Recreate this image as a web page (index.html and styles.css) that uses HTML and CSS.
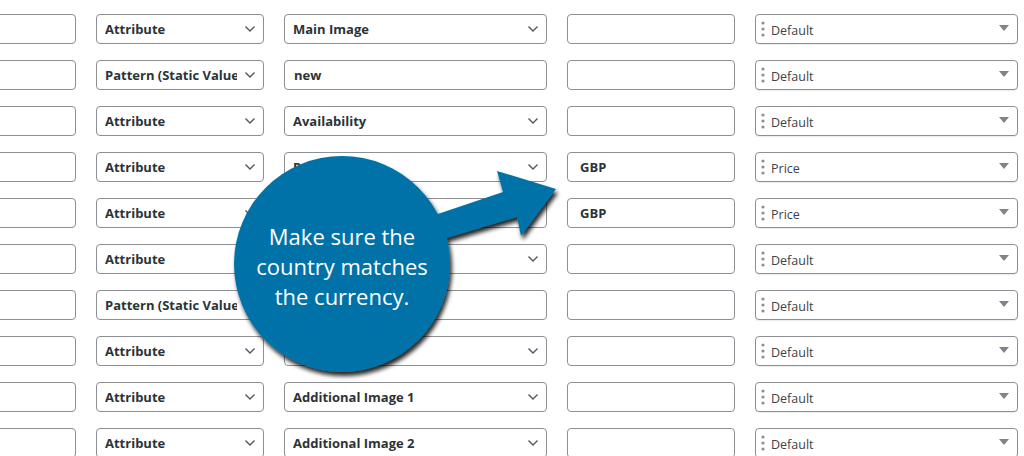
FILE: index.html
```html
<!DOCTYPE html>
<html>
<head>
<meta charset="utf-8">
<link rel="stylesheet" href="styles.css">
</head>
<body>
<div class="table">
  <div class="row">
    <div class="box"></div>
    <div class="box select"><span class="val">Attribute</span><svg class="chev" width="10" height="6" viewBox="0 0 10 6"><polyline points="0.5,0.5 5,5 9.5,0.5"/></svg></div>
    <div class="box select"><span class="val">Main Image</span><svg class="chev" width="10" height="6" viewBox="0 0 10 6"><polyline points="0.5,0.5 5,5 9.5,0.5"/></svg></div>
    <div class="box input"></div>
    <div class="box fancy"><svg class="dots" width="4" height="16" viewBox="0 0 4 16"><circle cx="2" cy="2" r="1.6"/><circle cx="2" cy="8" r="1.6"/><circle cx="2" cy="14" r="1.6"/></svg><span class="fval">Default</span><svg class="tri" width="10" height="6" viewBox="0 0 10 6"><polygon points="0,0 10,0 5,6"/></svg></div>
  </div>
  <div class="row">
    <div class="box"></div>
    <div class="box select"><span class="val">Pattern (Static Value)</span><svg class="chev" width="10" height="6" viewBox="0 0 10 6"><polyline points="0.5,0.5 5,5 9.5,0.5"/></svg></div>
    <div class="box input">new</div>
    <div class="box input"></div>
    <div class="box fancy"><svg class="dots" width="4" height="16" viewBox="0 0 4 16"><circle cx="2" cy="2" r="1.6"/><circle cx="2" cy="8" r="1.6"/><circle cx="2" cy="14" r="1.6"/></svg><span class="fval">Default</span><svg class="tri" width="10" height="6" viewBox="0 0 10 6"><polygon points="0,0 10,0 5,6"/></svg></div>
  </div>
  <div class="row">
    <div class="box"></div>
    <div class="box select"><span class="val">Attribute</span><svg class="chev" width="10" height="6" viewBox="0 0 10 6"><polyline points="0.5,0.5 5,5 9.5,0.5"/></svg></div>
    <div class="box select"><span class="val">Availability</span><svg class="chev" width="10" height="6" viewBox="0 0 10 6"><polyline points="0.5,0.5 5,5 9.5,0.5"/></svg></div>
    <div class="box input"></div>
    <div class="box fancy"><svg class="dots" width="4" height="16" viewBox="0 0 4 16"><circle cx="2" cy="2" r="1.6"/><circle cx="2" cy="8" r="1.6"/><circle cx="2" cy="14" r="1.6"/></svg><span class="fval">Default</span><svg class="tri" width="10" height="6" viewBox="0 0 10 6"><polygon points="0,0 10,0 5,6"/></svg></div>
  </div>
  <div class="row">
    <div class="box"></div>
    <div class="box select"><span class="val">Attribute</span><svg class="chev" width="10" height="6" viewBox="0 0 10 6"><polyline points="0.5,0.5 5,5 9.5,0.5"/></svg></div>
    <div class="box select"><span class="val">Price</span><svg class="chev" width="10" height="6" viewBox="0 0 10 6"><polyline points="0.5,0.5 5,5 9.5,0.5"/></svg></div>
    <div class="box input">GBP</div>
    <div class="box fancy"><svg class="dots" width="4" height="16" viewBox="0 0 4 16"><circle cx="2" cy="2" r="1.6"/><circle cx="2" cy="8" r="1.6"/><circle cx="2" cy="14" r="1.6"/></svg><span class="fval">Price</span><svg class="tri" width="10" height="6" viewBox="0 0 10 6"><polygon points="0,0 10,0 5,6"/></svg></div>
  </div>
  <div class="row">
    <div class="box"></div>
    <div class="box select"><span class="val">Attribute</span><svg class="chev" width="10" height="6" viewBox="0 0 10 6"><polyline points="0.5,0.5 5,5 9.5,0.5"/></svg></div>
    <div class="box select"><span class="val"></span><svg class="chev" width="10" height="6" viewBox="0 0 10 6"><polyline points="0.5,0.5 5,5 9.5,0.5"/></svg></div>
    <div class="box input">GBP</div>
    <div class="box fancy"><svg class="dots" width="4" height="16" viewBox="0 0 4 16"><circle cx="2" cy="2" r="1.6"/><circle cx="2" cy="8" r="1.6"/><circle cx="2" cy="14" r="1.6"/></svg><span class="fval">Price</span><svg class="tri" width="10" height="6" viewBox="0 0 10 6"><polygon points="0,0 10,0 5,6"/></svg></div>
  </div>
  <div class="row">
    <div class="box"></div>
    <div class="box select"><span class="val">Attribute</span><svg class="chev" width="10" height="6" viewBox="0 0 10 6"><polyline points="0.5,0.5 5,5 9.5,0.5"/></svg></div>
    <div class="box select"><span class="val"></span><svg class="chev" width="10" height="6" viewBox="0 0 10 6"><polyline points="0.5,0.5 5,5 9.5,0.5"/></svg></div>
    <div class="box input"></div>
    <div class="box fancy"><svg class="dots" width="4" height="16" viewBox="0 0 4 16"><circle cx="2" cy="2" r="1.6"/><circle cx="2" cy="8" r="1.6"/><circle cx="2" cy="14" r="1.6"/></svg><span class="fval">Default</span><svg class="tri" width="10" height="6" viewBox="0 0 10 6"><polygon points="0,0 10,0 5,6"/></svg></div>
  </div>
  <div class="row">
    <div class="box"></div>
    <div class="box select"><span class="val">Pattern (Static Value)</span><svg class="chev" width="10" height="6" viewBox="0 0 10 6"><polyline points="0.5,0.5 5,5 9.5,0.5"/></svg></div>
    <div class="box input"></div>
    <div class="box input"></div>
    <div class="box fancy"><svg class="dots" width="4" height="16" viewBox="0 0 4 16"><circle cx="2" cy="2" r="1.6"/><circle cx="2" cy="8" r="1.6"/><circle cx="2" cy="14" r="1.6"/></svg><span class="fval">Default</span><svg class="tri" width="10" height="6" viewBox="0 0 10 6"><polygon points="0,0 10,0 5,6"/></svg></div>
  </div>
  <div class="row">
    <div class="box"></div>
    <div class="box select"><span class="val">Attribute</span><svg class="chev" width="10" height="6" viewBox="0 0 10 6"><polyline points="0.5,0.5 5,5 9.5,0.5"/></svg></div>
    <div class="box select"><span class="val"></span><svg class="chev" width="10" height="6" viewBox="0 0 10 6"><polyline points="0.5,0.5 5,5 9.5,0.5"/></svg></div>
    <div class="box input"></div>
    <div class="box fancy"><svg class="dots" width="4" height="16" viewBox="0 0 4 16"><circle cx="2" cy="2" r="1.6"/><circle cx="2" cy="8" r="1.6"/><circle cx="2" cy="14" r="1.6"/></svg><span class="fval">Default</span><svg class="tri" width="10" height="6" viewBox="0 0 10 6"><polygon points="0,0 10,0 5,6"/></svg></div>
  </div>
  <div class="row">
    <div class="box"></div>
    <div class="box select"><span class="val">Attribute</span><svg class="chev" width="10" height="6" viewBox="0 0 10 6"><polyline points="0.5,0.5 5,5 9.5,0.5"/></svg></div>
    <div class="box select"><span class="val">Additional Image 1</span><svg class="chev" width="10" height="6" viewBox="0 0 10 6"><polyline points="0.5,0.5 5,5 9.5,0.5"/></svg></div>
    <div class="box input"></div>
    <div class="box fancy"><svg class="dots" width="4" height="16" viewBox="0 0 4 16"><circle cx="2" cy="2" r="1.6"/><circle cx="2" cy="8" r="1.6"/><circle cx="2" cy="14" r="1.6"/></svg><span class="fval">Default</span><svg class="tri" width="10" height="6" viewBox="0 0 10 6"><polygon points="0,0 10,0 5,6"/></svg></div>
  </div>
  <div class="row">
    <div class="box"></div>
    <div class="box select"><span class="val">Attribute</span><svg class="chev" width="10" height="6" viewBox="0 0 10 6"><polyline points="0.5,0.5 5,5 9.5,0.5"/></svg></div>
    <div class="box select"><span class="val">Additional Image 2</span><svg class="chev" width="10" height="6" viewBox="0 0 10 6"><polyline points="0.5,0.5 5,5 9.5,0.5"/></svg></div>
    <div class="box input"></div>
    <div class="box fancy"><svg class="dots" width="4" height="16" viewBox="0 0 4 16"><circle cx="2" cy="2" r="1.6"/><circle cx="2" cy="8" r="1.6"/><circle cx="2" cy="14" r="1.6"/></svg><span class="fval">Default</span><svg class="tri" width="10" height="6" viewBox="0 0 10 6"><polygon points="0,0 10,0 5,6"/></svg></div>
  </div>
</div>

<div class="callout">
  <svg class="callout-shape" width="1024" height="456" viewBox="0 0 1024 456">
    <defs>
      <filter id="shadow" x="-20%" y="-20%" width="140%" height="140%">
        <feDropShadow dx="2" dy="4" stdDeviation="2" flood-color="#000" flood-opacity="0.85"/>
      </filter>
    </defs>
    <g filter="url(#shadow)" fill="#0572a8">
      <polygon points="420,220 503,192 497,171 556,189 521,236 517,217 420,246"/>
      <circle cx="342" cy="264" r="108"/>
    </g>
  </svg>
  <div class="callout-text">Make sure the<br>country matches<br>the currency.</div>
</div>
</body>
</html>
```

FILE: styles.css
```css
html, body {
  margin: 0;
  padding: 0;
}

body {
  width: 1024px;
  height: 456px;
  overflow: hidden;
  position: relative;
  background: #fff;
  font-family: "Open Sans", "Noto Sans", sans-serif;
}

.table {
  padding-top: 14px;
  margin-left: -92px;
  display: flex;
  flex-direction: column;
  gap: 16px;
}

.row {
  display: grid;
  grid-template-columns: 168px 168px 263px 168px 263px;
  column-gap: 20px;
  height: 30px;
}

.box {
  box-sizing: border-box;
  height: 30px;
  border: 1px solid #8c8f94;
  border-radius: 4px;
  background: #fff;
  display: flex;
  align-items: center;
  padding: 0 8px;
  font-size: 13px;
  font-weight: 700;
  color: #2c3338;
  white-space: nowrap;
  overflow: hidden;
}

.select .val {
  flex: 1;
  min-width: 0;
  overflow: hidden;
  white-space: nowrap;
}

.chev {
  flex: none;
  margin-left: 8px;
}

.chev polyline {
  fill: none;
  stroke: #50575e;
  stroke-width: 1.4;
}

.input {
  padding-left: 9px;
}

.row .input:nth-child(4) {
  padding-left: 12px;
}

.fancy {
  padding: 0 8px 0 5px;
  font-weight: 400;
  font-size: 12.5px;
  color: #3c434a;
  box-shadow: 0 1px 1px rgba(0, 0, 0, 0.08);
}

.dots {
  flex: none;
  fill: #8c8f94;
}

.fval {
  flex: 1;
  margin-left: 6px;
  padding-top: 2px;
}

.tri {
  flex: none;
  fill: #80848a;
  margin-top: -3px;
}

.callout {
  position: absolute;
  left: 0;
  top: 0;
  width: 1024px;
  height: 456px;
  pointer-events: none;
}

.callout-shape {
  position: absolute;
  left: 0;
  top: 0;
}

.callout-text {
  position: absolute;
  left: 234px;
  top: 221px;
  width: 216px;
  text-align: center;
  color: #fff;
  font-family: "Open Sans", "Noto Sans", sans-serif;
  font-size: 22px;
  line-height: 30px;
  font-weight: 400;
}
```
